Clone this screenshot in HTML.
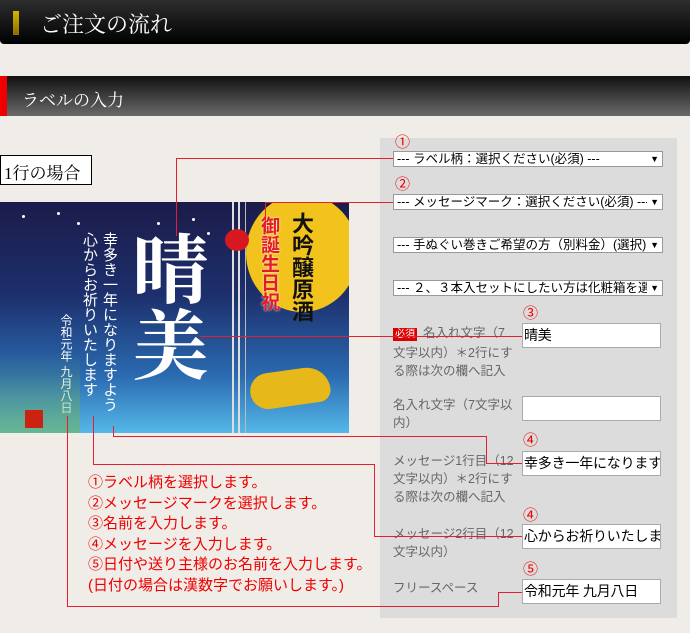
<!DOCTYPE html>
<html><head><meta charset="utf-8"><style>
*{margin:0;padding:0;box-sizing:border-box}
body{width:690px;height:633px;background:#f0ece7;position:relative;overflow:hidden;font-family:"Liberation Sans","Noto Sans CJK JP",sans-serif}
.a{position:absolute}
.h1{left:0;top:0;width:690px;height:44px;background:linear-gradient(#2e2e2e,#000);border-radius:0 0 4px 4px}
.h1 .bar{left:13px;top:11px;width:6px;height:24px;background:linear-gradient(#d8b400,#8a6d00)}
.h1 .t{left:40px;top:8px;color:#fff;font:22px "Liberation Serif","Noto Serif CJK SC",serif}
.h2{left:0;top:76px;width:690px;height:40px;background:linear-gradient(#111,#6a6a6a)}
.h2 .bar{left:0;top:0;width:7px;height:40px;background:#e00}
.h2 .t{left:22px;top:10px;color:#fff;font:17px "Liberation Serif","Noto Serif CJK SC",serif}
.box{left:0;top:155px;width:92px;height:30px;background:#fff;border:1px solid #000;font:17px "Liberation Serif","Noto Serif CJK SC",serif;padding:3px 0 0 3px;white-space:nowrap}
.label{left:0;top:202px;width:349px;height:231px;background:linear-gradient(#1b1c4a 0%,#1d2f6c 40%,#2a6ab0 75%,#55b8e8 100%);overflow:hidden}
.panel{left:380px;top:138px;width:297px;height:480px;background:#dcdcdc}
.sel{position:absolute;left:393px;width:270px;height:16px;background:#fff;border:1px solid #999;font-size:12.5px;line-height:14px;white-space:nowrap;color:#000}
.sel span{position:absolute;left:3px;top:0;width:250px;overflow:hidden}
.sel:after{content:"▼";position:absolute;right:3px;top:0;font-size:9px}
.num{position:absolute;color:#e00;font-size:15px;line-height:15px}
.inp{position:absolute;left:522px;width:139px;height:25px;background:#fff;border:1px solid #aaa;font-size:14px;letter-spacing:-0.2px;line-height:23px;padding-left:1px;white-space:nowrap;overflow:hidden}
.lb{position:absolute;left:393px;color:#666;font-size:12.5px;line-height:18px;white-space:nowrap}
.req{background:#d00;color:#fff;font-size:10px;padding:1px 2px;margin-right:6px}
.r{position:absolute;background:#e42030}
.red{left:88px;top:473px;color:#e00;font-size:15px;line-height:20.5px;white-space:nowrap}
.v{writing-mode:vertical-rl;position:absolute;color:#fff;white-space:nowrap}
</style></head><body>
<div class="a h1"><div class="a bar"></div><div class="a t">ご注文の流れ</div></div>
<div class="a h2"><div class="a bar"></div><div class="a t">ラベルの入力</div></div>
<div class="a box">1行の場合</div>
<div class="a panel"></div>

<div class="a label">
 <div class="a" style="left:246px;top:-8px;width:112px;height:118px;border-radius:50%;background:#f2c31c"></div>
 <div class="a" style="left:232px;top:0;width:2px;height:231px;background:#ddd"></div>
 <div class="a" style="left:238px;top:0;width:2px;height:231px;background:#ddd"></div>
 <div class="a" style="left:245px;top:0;width:1px;height:231px;background:#bbb"></div>
 <div class="v" style="left:258px;top:14px;color:#e41c2a;font-weight:bold;font-size:19px;line-height:20px;text-shadow:0 0 2px #fff">御誕生日祝</div>
 <div class="v" style="left:290px;top:10px;color:#111;font-weight:bold;font-size:22px;line-height:22px">大吟醸原酒</div>
 <div class="a" style="left:225px;top:27px;width:24px;height:22px;border-radius:50%;background:#d81820"></div>
 <div class="v" style="left:125px;top:28px;font-size:76px;line-height:90px;font-weight:bold;font-family:'Noto Serif CJK SC',serif">晴美</div>
 <div class="v" style="left:100px;top:30px;font-size:15px;line-height:18px">幸多き一年になりますよう</div>
 <div class="v" style="left:80px;top:30px;font-size:15px;line-height:18px">心からお祈りいたします</div>
 <div class="v" style="left:59px;top:112px;font-size:12px;line-height:14px">令和元年 九月八日</div>
 <div class="a" style="left:250px;top:168px;width:80px;height:36px;background:#e7b81a;border-radius:30px 40px 20px 30px;transform:rotate(-8deg)"></div>
 <div class="a" style="left:0;top:150px;width:80px;height:81px;background:linear-gradient(transparent,rgba(120,180,60,.5))"></div>
 <div class="a" style="left:25px;top:208px;width:18px;height:18px;background:#c21"></div>
 <div class="a" style="left:57px;top:10px;width:3px;height:3px;background:#fff;border-radius:50%;box-shadow:100px 10px #fff,135px 6px #fff,80px 30px #fff,20px 10px #fff,-35px 3px #fff,150px 20px #fff"></div>
</div>

<div class="num" style="left:395px;top:135px">①</div>
<div class="sel" style="top:151px"><span>--- ラベル柄：選択ください(必須) ---</span></div>
<div class="num" style="left:395px;top:177px">②</div>
<div class="sel" style="top:194px"><span>--- メッセージマーク：選択ください(必須) ---</span></div>
<div class="sel" style="top:237px"><span>--- 手ぬぐい巻きご希望の方（別料金）(選択) ---</span></div>
<div class="sel" style="top:280px"><span>--- ２、３本入セットにしたい方は化粧箱を選択</span></div>

<div class="num" style="left:523px;top:306px">③</div>
<div class="lb" style="top:324px"><span class="req">必須</span>名入れ文字（7<br>文字以内）＊2行にす<br>る際は次の欄へ記入</div>
<div class="inp" style="top:323px">晴美</div>
<div class="lb" style="top:396px">名入れ文字（7文字以<br>内）</div>
<div class="inp" style="top:396px"></div>
<div class="num" style="left:523px;top:433px">④</div>
<div class="lb" style="top:452px">メッセージ1行目（12<br>文字以内）＊2行にす<br>る際は次の欄へ記入</div>
<div class="inp" style="top:451px">幸多き一年になります</div>
<div class="num" style="left:523px;top:508px">④</div>
<div class="lb" style="top:525px">メッセージ2行目（12<br>文字以内）</div>
<div class="inp" style="top:524px">心からお祈りいたしま</div>
<div class="num" style="left:523px;top:562px">⑤</div>
<div class="lb" style="top:579px">フリースペース</div>
<div class="inp" style="top:579px">令和元年 九月八日</div>

<div class="r" style="left:176px;top:158px;width:217px;height:1px"></div>
<div class="r" style="left:176px;top:158px;width:1px;height:78px"></div>
<div class="r" style="left:265px;top:202px;width:128px;height:1px"></div>
<div class="r" style="left:265px;top:202px;width:1px;height:30px"></div>
<div class="r" style="left:200px;top:336px;width:322px;height:1px"></div>
<div class="r" style="left:113px;top:426px;width:1px;height:11px"></div>
<div class="r" style="left:113px;top:436px;width:373px;height:1px"></div>
<div class="r" style="left:486px;top:436px;width:1px;height:28px"></div>
<div class="r" style="left:486px;top:463px;width:36px;height:1px"></div>
<div class="r" style="left:93px;top:416px;width:1px;height:49px"></div>
<div class="r" style="left:93px;top:464px;width:282px;height:1px"></div>
<div class="r" style="left:374px;top:464px;width:1px;height:73px"></div>
<div class="r" style="left:374px;top:536px;width:148px;height:1px"></div>
<div class="r" style="left:67px;top:416px;width:1px;height:191px"></div>
<div class="r" style="left:67px;top:606px;width:432px;height:1px"></div>
<div class="r" style="left:498px;top:592px;width:1px;height:15px"></div>
<div class="r" style="left:498px;top:592px;width:24px;height:1px"></div>

<div class="a red">①ラベル柄を選択します。<br>②メッセージマークを選択します。<br>③名前を入力します。<br>④メッセージを入力します。<br>⑤日付や送り主様のお名前を入力します。<br>(日付の場合は漢数字でお願いします。)</div>
</body></html>
